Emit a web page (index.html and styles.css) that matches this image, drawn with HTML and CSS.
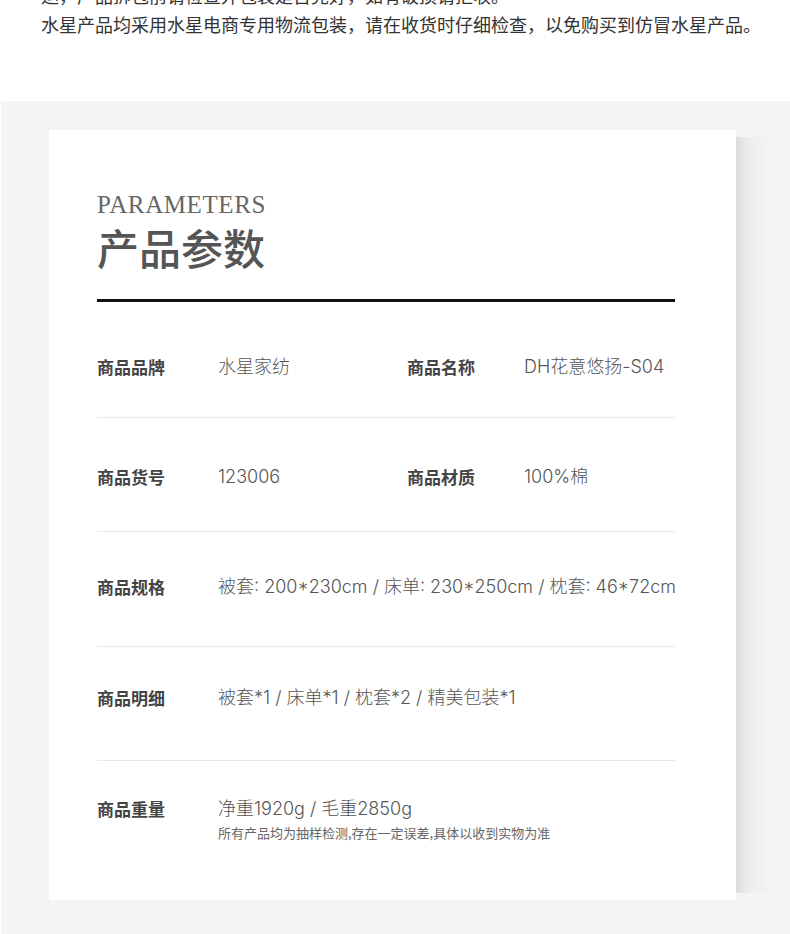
FILE: index.html
```html
<!DOCTYPE html>
<html lang="zh-CN">
<head>
  <meta charset="UTF-8">
  <meta name="viewport" content="width=device-width, initial-scale=1.0">
  <title>产品参数</title>
  <link rel="stylesheet" href="styles.css">
</head>
<body>
  <div class="notice">
    <p>运，产品拆包前请检查外包装是否完好，如有破损请拒收。</p>
    <p>水星产品均采用水星电商专用物流包装，请在收货时仔细检查，以免购买到仿冒水星产品。</p>
  </div>

  <div class="section">
    <div class="card">
      <div class="title">
        <div class="title-en">PARAMETERS</div>
        <h2 class="title-cn">产品参数</h2>
      </div>
      <div class="divider"></div>

      <div class="params">
        <div class="row">
          <span class="label">商品品牌</span>
          <span class="value">水星家纺</span>
          <span class="label">商品名称</span>
          <span class="value">DH花意悠扬-S04</span>
        </div>
        <div class="row">
          <span class="label">商品货号</span>
          <span class="value">123006</span>
          <span class="label">商品材质</span>
          <span class="value">100%棉</span>
        </div>
        <div class="row">
          <span class="label">商品规格</span>
          <span class="value wide">被套: 200*230cm / 床单: 230*250cm / 枕套: 46*72cm</span>
        </div>
        <div class="row">
          <span class="label">商品明细</span>
          <span class="value wide">被套*1 / 床单*1 / 枕套*2 / 精美包装*1</span>
        </div>
        <div class="row">
          <span class="label">商品重量</span>
          <div class="value wide">
            净重1920g / 毛重2850g
            <p class="note">所有产品均为抽样检测,存在一定误差,具体以收到实物为准</p>
          </div>
        </div>
      </div>
    </div>
  </div>
</body>
</html>
```

FILE: styles.css
```css
body {
  margin: 0;
  padding: 0;
  font-family: "Noto Sans CJK SC", "Noto Sans", sans-serif;
  background: #fff;
  overflow: hidden;
}

/* Notice text above the parameters block */
.notice {
  margin-top: -19px;
  padding-left: 41px;
  margin-bottom: 62px;
  font-size: 18px;
  line-height: 29px;
  color: #333;
}

.notice p {
  margin: 0;
  white-space: nowrap;
}

.section {
  margin-left: 1px;
  background: #f4f4f4;
  padding: 29px 0 40px 48px;
}

.card {
  position: relative;
  width: 687px;
  height: 770px;
  box-sizing: border-box;
  padding: 60px 61px 0 48px;
  background: #fff;
}

/* soft shadow strip on the right of the card */
.card::after {
  content: "";
  position: absolute;
  top: 7px;
  bottom: 7px;
  left: 100%;
  width: 40px;
  background: linear-gradient(to right, #dcdcdc, #ececec 30%, #f6f6f6);
}

.title-en {
  font-family: "Liberation Serif", serif;
  font-size: 25px;
  line-height: 30px;
  letter-spacing: 0.6px;
  color: #666;
}

.title-cn {
  margin: 6px 0 0;
  font-size: 42px;
  line-height: 42px;
  font-weight: 500;
  color: #555;
  letter-spacing: 0;
}

.divider {
  margin-top: 31px;
  height: 3px;
  background: #111;
}

.row {
  display: grid;
  grid-template-columns: 121px 189px 117px auto;
  align-items: start;
  box-sizing: border-box;
  border-bottom: 1px solid #e9e9e9;
  line-height: 24px;
}

.row:nth-child(1) { height: 116px; padding-top: 53px; }
.row:nth-child(2) { height: 114px; padding-top: 47px; }
.row:nth-child(3) { height: 115px; padding-top: 43px; }
.row:nth-child(4) { height: 114px; padding-top: 39px; }
.row:nth-child(5) { padding-top: 36px; border-bottom: none; }

.label {
  font-size: 17px;
  font-weight: 700;
  color: #444;
}

.value {
  font-family: Inter, "Noto Sans CJK SC", sans-serif;
  font-size: 18px;
  font-weight: 300;
  color: #555;
  white-space: nowrap;
}

.wide {
  grid-column: 2 / 5;
}

.note {
  margin: 3px 0 0;
  font-family: "Noto Sans CJK SC", sans-serif;
  font-size: 13px;
  line-height: 18px;
  font-weight: 400;
  color: #666;
}
```
